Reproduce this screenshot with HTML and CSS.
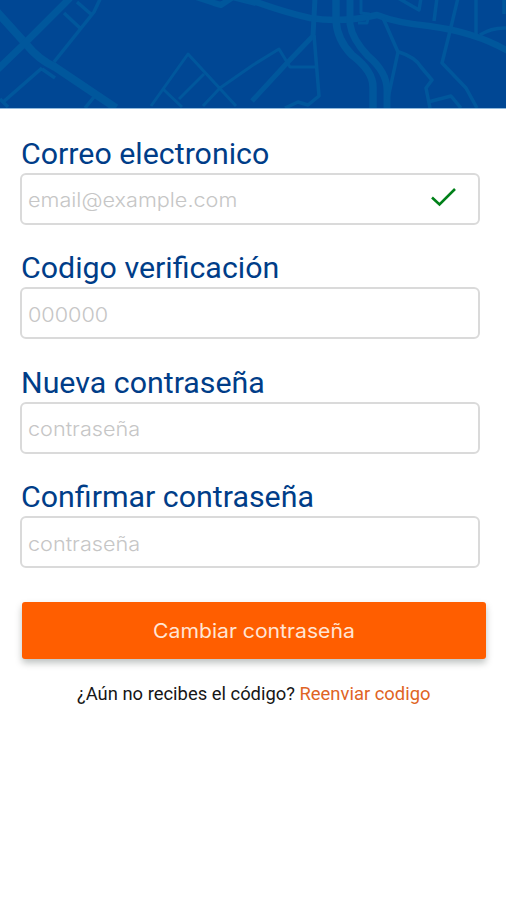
FILE: index.html
```html
<!DOCTYPE html>
<html lang="es">
<head>
<meta charset="utf-8">
<title>Cambiar contraseña</title>
<link rel="stylesheet" href="styles.css">
</head>
<body>
<header class="banner">
<svg class="map" viewBox="0 0 506 108" fill="none" stroke="#00579c" stroke-linejoin="round">
<g stroke-width="8"><path d="M-3 12L26 44Q39 60 55 67L116 108"/><path d="M-3 70L24 44L70-2" stroke-width="7"/></g>
<g stroke-width="3.5"><path d="M101-3L94 12L54 62M64 13L81 29M77 2L92 15M2 103L42 68M0 99L8 107M85 108L94 97M42 69L55 78"/></g>
<g stroke-width="3"><path d="M151 106L188 54L236 106M163 89L182 107M179 99L204 74M203 106L220 88L253 65L279 49L290 67L316 67"/></g>
<path d="M196-3L214 3L221 5L233-3M232-3L256 3" stroke-width="6"/>
<path d="M245-2Q283 12 310 18Q343 23 377 15Q397 23 429 26Q475 32 508 51" stroke-width="6.5"/>
<path d="M252 101L287 63L313 36L315-2" stroke-width="5"/>
<path d="M314 35L319 96L308 105L298 102L285 108" stroke-width="3.5"/>
<path d="M336-2L336 20Q337 40 352 55Q373 71 373 87V108" stroke-width="7.5"/>
<path d="M350-2V24Q352 39 368 56Q387 72 387 90V108" stroke-width="7"/>
<path d="M361-2V13L369 14L367 23H358" stroke-width="3"/>
<path d="M383 18L398 52L387 103M399 52Q415 57 421 67L432 80L426 88L430 108M428 102L451 96L461 108" stroke-width="3.5"/>
<path d="M398-2L419 10L421-2M437-2L434 21M458-2L450 31L442 63L466 88L477 108M476-2V35M480 35Q492 27 508 28M504-2V14" stroke-width="3.5"/>
</svg>
</header>
<main class="form">
<section class="group"><label class="label">Correo electronico</label><div class="field"><span class="hint">email@example.com</span><svg class="check" width="26" height="20" viewBox="0 0 26 20" fill="none" stroke="#008019" stroke-width="2.6"><path d="M1 10.5L8.5 17.5L24 2"/></svg></div></section>
<section class="group"><label class="label">Codigo verificación</label><div class="field"><span class="hint">000000</span></div></section>
<section class="group"><label class="label">Nueva contraseña</label><div class="field"><span class="hint">contraseña</span></div></section>
<section class="group"><label class="label">Confirmar contraseña</label><div class="field"><span class="hint">contraseña</span></div></section>
<button class="submit"><span class="caption">Cambiar contraseña</span></button>
<p class="resend">¿Aún no recibes el código? <a class="link">Reenviar codigo</a></p>
</main>
</body>
</html>
```

FILE: styles.css
```css
* { box-sizing: border-box; }
body { margin: 0; background: #fff; font-family: Roboto, sans-serif; }
.banner { height: 109px; background: #004794; border-bottom: 1px solid #8fb9dc; overflow: hidden; }
.map { display: block; width: 506px; height: 108px; }
.form { padding: 28.5px 20px 0; }
.group { width: 460px; height: 114.5px; }
.label { display: block; height: 35px; padding-left: 1px; font-size: 30.35px; line-height: 32px; color: #003d88; white-space: nowrap; }
.field { display: flex; align-items: center; justify-content: space-between; height: 52px; padding: 3px 21px 0 6px; border: 2px solid #dadada; border-radius: 6px; }
.hint { font-family: Inter, sans-serif; font-weight: 300; font-size: 19.5px; color: #c6c6c6; transform: scaleX(1.11); transform-origin: left; }
.check { margin-top: -7px; }
.submit { display: block; width: 464px; height: 57px; margin: 6px 0 0 2px; padding: 1px 0 0; border: 0; border-radius: 3px; background: #ff5e00; color: #ffe5d5; font: 400 19.5px Inter, sans-serif; box-shadow: 0 4px 7px rgba(0,20,15,.26); }
.caption { display: inline-block; transform: scaleX(1.085); }
.resend { margin: 23px 0 0 57px; font-size: 18.4px; line-height: 24px; color: #161616; white-space: nowrap; }
.link { color: #df6424; }
```
